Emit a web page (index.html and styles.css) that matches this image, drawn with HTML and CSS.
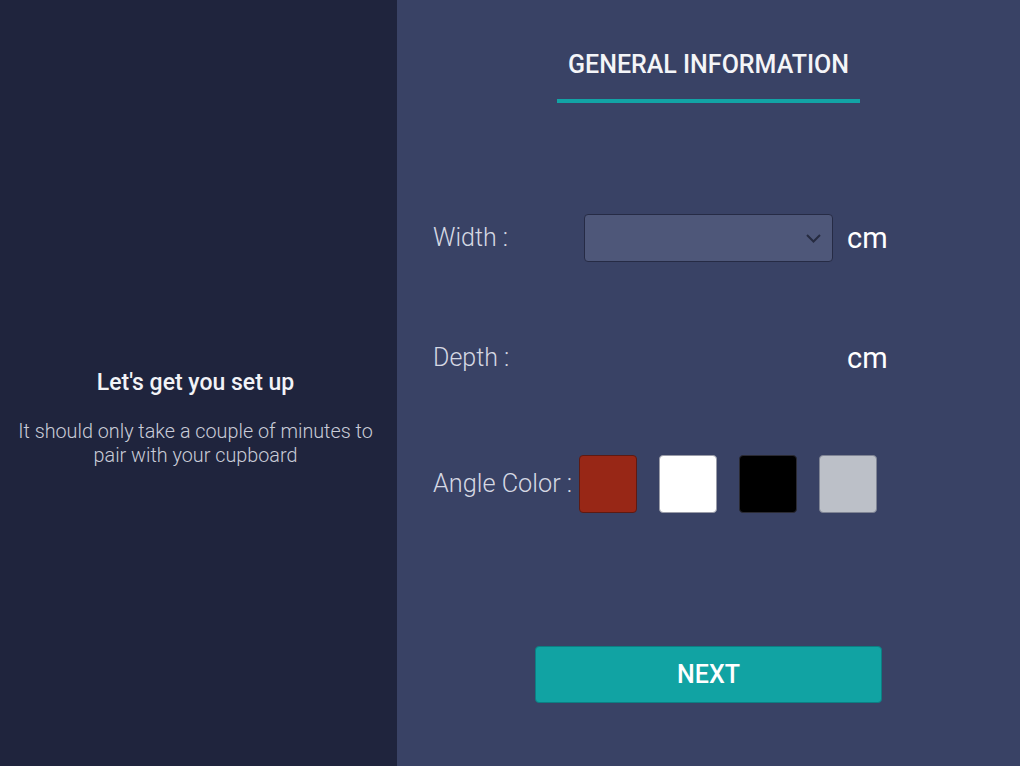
FILE: index.html
```html
<!DOCTYPE html>
<html lang="en">
<head>
<meta charset="utf-8">
<title>Setup</title>
<link rel="stylesheet" href="styles.css">
</head>
<body>
<div class="app">
  <aside class="intro">
    <h1 class="intro-title">Let's get you set up</h1>
    <p class="intro-text">It should only take a couple of minutes to pair with your cupboard</p>
  </aside>
  <main class="panel">
    <div class="tabs">
      <h2 class="tab">GENERAL INFORMATION</h2>
    </div>
    <form class="form">
      <div class="row">
        <label class="label">Width :</label>
        <div class="select-wrap">
          <select class="select"><option></option></select>
          <svg class="chev" width="15" height="9" viewBox="0 0 15 9"><path d="M1 1 L7.5 7.5 L14 1" fill="none" stroke="#262b40" stroke-width="2"/></svg>
        </div>
        <span class="unit">cm</span>
      </div>
      <div class="row">
        <label class="label">Depth :</label>
        <div class="spacer"></div>
        <span class="unit">cm</span>
      </div>
      <div class="row row-angle">
        <label class="label label-angle">Angle Color :</label>
        <div class="swatches">
          <button type="button" class="swatch swatch-red"></button>
          <button type="button" class="swatch swatch-white"></button>
          <button type="button" class="swatch swatch-black"></button>
          <button type="button" class="swatch swatch-grey"></button>
        </div>
      </div>
    </form>
    <button type="button" class="next">NEXT</button>
  </main>
</div>
</body>
</html>
```

FILE: styles.css
```css
* { box-sizing: border-box; }
html, body { margin: 0; padding: 0; }
body {
  font-family: Roboto, "Liberation Sans", sans-serif;
  width: 1020px;
  height: 766px;
  overflow: hidden;
}
.app {
  display: flex;
  height: 766px;
}
.intro {
  width: 397px;
  flex: none;
  background: #1f243d;
  padding: 369px 16px 0 10px;
  text-align: center;
}
.intro-title {
  margin: 0;
  font-size: 23px;
  line-height: 27px;
  font-weight: 500;
  color: #f2f3f7;
}
.intro-text {
  margin: 24px 0 0;
  font-size: 19.8px;
  line-height: 24px;
  font-weight: 300;
  color: #c9ccd8;
}
.panel {
  flex: 1;
  background: #394265;
  display: flex;
  flex-direction: column;
  align-items: center;
  padding-top: 50px;
}
.tabs {
  display: flex;
  justify-content: center;
}
.tab {
  margin: 0;
  padding: 0 11px 20px;
  border-bottom: 4px solid #12a3a5;
  font-size: 25px;
  line-height: 29px;
  font-weight: 500;
  color: #f4f5f8;
}
.form {
  align-self: stretch;
  padding-left: 36px;
  margin-top: 111px;
  display: flex;
  flex-direction: column;
  gap: 80px;
}
.row {
  display: flex;
  align-items: center;
}
.row-angle { margin-top: 1px; }
.label {
  width: 151px;
  flex: none;
  font-size: 25px;
  line-height: 32px;
  font-weight: 300;
  color: #d5d8e3;
  white-space: nowrap;
}
.label-angle {
  width: 146px;
  font-size: 25.3px;
}
.select-wrap {
  position: relative;
  width: 249px;
  height: 48px;
}
.select {
  appearance: none;
  -webkit-appearance: none;
  width: 100%;
  height: 100%;
  margin: 0;
  background: #4e5779;
  border: 1px solid #262b45;
  border-radius: 4px;
  color: #fff;
  font: inherit;
}
.chev {
  position: absolute;
  right: 12px;
  top: 20px;
  pointer-events: none;
}
.spacer { width: 249px; height: 32px; }
.unit {
  margin-left: 14px;
  font-size: 29px;
  line-height: 32px;
  font-weight: 400;
  color: #ffffff;
}
.swatches {
  display: flex;
  gap: 22px;
}
.swatch {
  width: 58px;
  height: 58px;
  padding: 0;
  border-radius: 4px;
  border: 1px solid rgba(0,0,0,0.4);
}
.swatch-red { background: #982716; border-color: #5e1a12; }
.swatch-white { background: #ffffff; border-color: #9a9ca8; }
.swatch-black { background: #000000; border-color: #2a2a33; }
.swatch-grey { background: #bcc0c8; border-color: #7f8494; }
.next {
  margin-top: 133px;
  width: 347px;
  height: 57px;
  background: #11a3a3;
  border: 1px solid #0c7f83;
  border-radius: 4px;
  color: #ffffff;
  font-family: inherit;
  font-size: 25px;
  font-weight: 500;
  line-height: 29px;
  padding: 0;
}
```
